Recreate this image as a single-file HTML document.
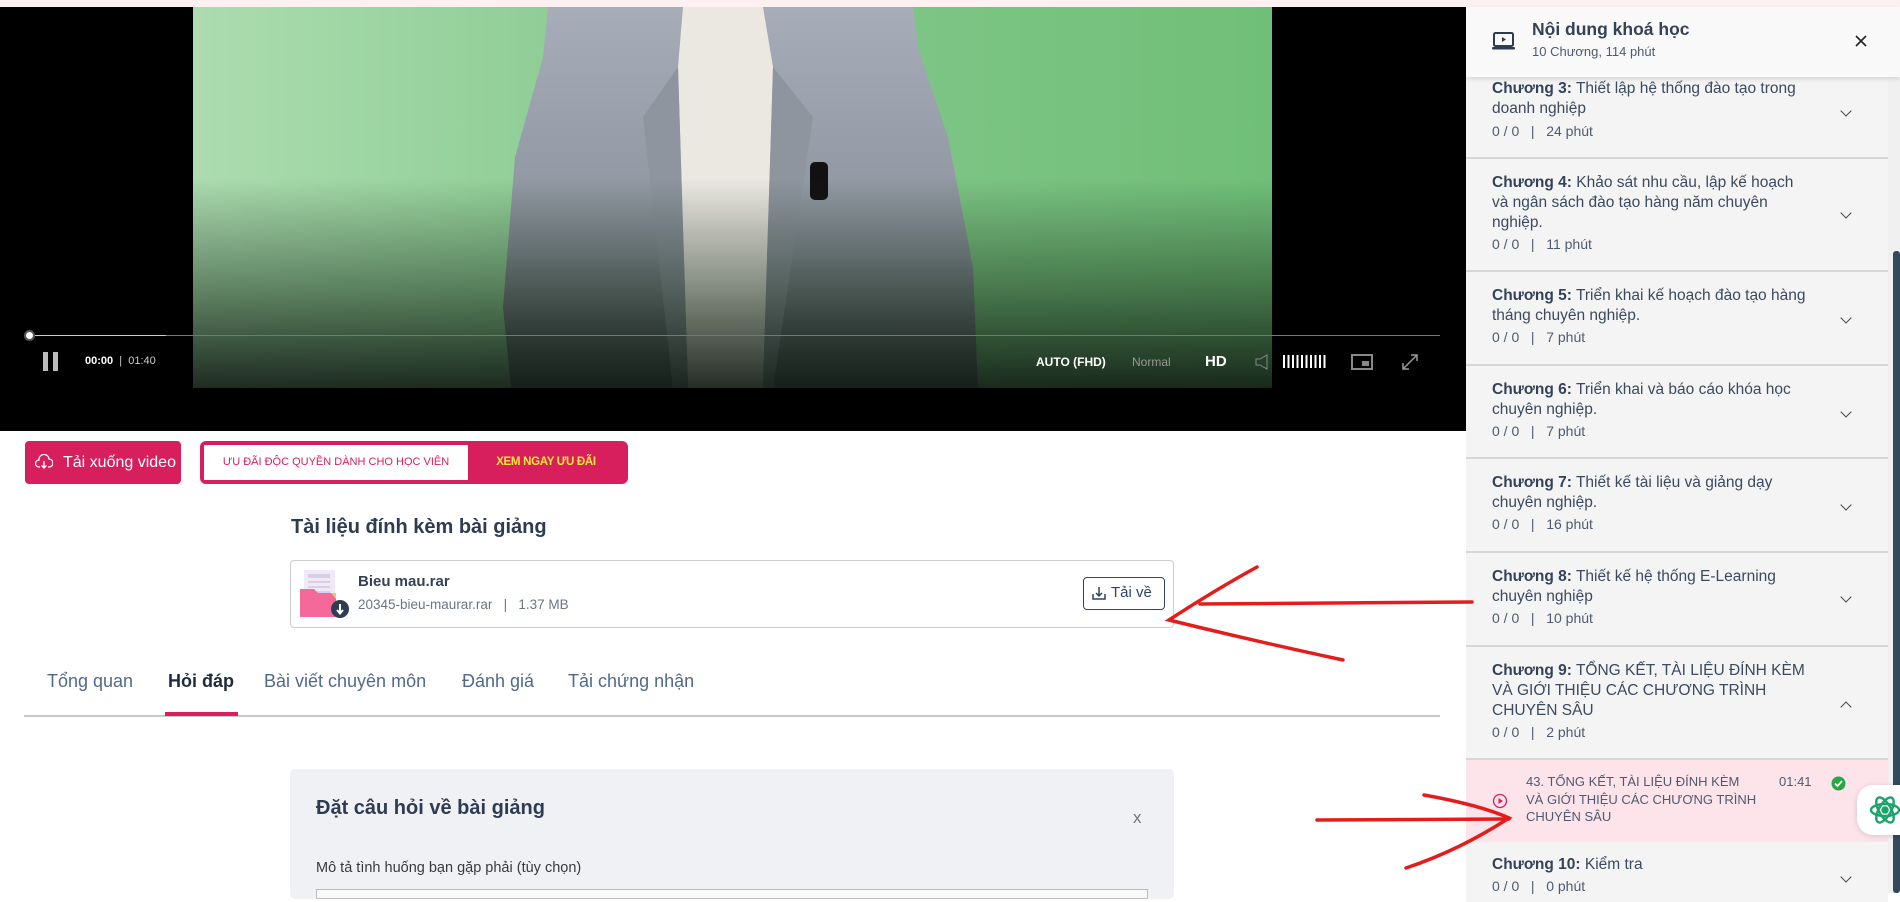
<!DOCTYPE html>
<html><head><meta charset="utf-8"><style>
*{margin:0;padding:0;box-sizing:border-box}
body{width:1900px;height:893px;overflow:hidden;background:#fff;font-family:"Liberation Sans","Noto Sans CJK SC",sans-serif;position:relative}
.a{position:absolute}
.ctl{color:#fff;font-size:12px;font-weight:bold}
.row{position:absolute;left:1466px;width:422px;border-bottom:2px solid #d6d6d6;background:#f4f4f4}
.row .t{position:absolute;left:26px;white-space:nowrap;font-size:15.5px;line-height:20px;color:#3b4a5e}
.row .t b{color:#344257}
.row .m{position:absolute;left:26px;font-size:14px;color:#4d5b70;white-space:pre}
.chev{position:absolute;left:376px;width:8px;height:8px;border-right:1.6px solid #444;border-bottom:1.6px solid #444;transform:rotate(45deg)}
.tab{position:absolute;top:671px;font-size:18px;color:#52698a}
</style></head><body>
<div class="a" style="left:0;top:0;width:1900px;height:7px;background:#fdf0f0"></div>
<!-- video -->
<div class="a" style="left:0;top:7px;width:1466px;height:424px;background:#000"></div>
<div class="a" style="left:193px;top:7px;width:1079px;height:381px;background:linear-gradient(90deg,#acdcb0,#86c98d 45%,#70bf78);overflow:hidden">
<svg class="a" style="left:0;top:0" width="1079" height="381">
<defs><linearGradient id="j" x1="0" y1="0" x2="0" y2="1"><stop offset="0" stop-color="#a6adb8"/><stop offset=".65" stop-color="#8a919c"/><stop offset="1" stop-color="#5c6168"/></linearGradient></defs>
<path d="M355 0 L350 50 L322 150 L310 300 L318 381 L785 381 L780 260 L755 130 L725 40 L720 0 Z" fill="url(#j)"/>
<path d="M490 0 L485 60 L495 381 L570 381 L580 60 L570 0 Z" fill="#ebe8e2"/>
<path d="M485 60 L450 110 L480 381 L495 381 Z" fill="#8e959f"/>
<path d="M580 60 L620 110 L580 381 L570 381 Z" fill="#8e959f"/>
<rect x="617" y="155" width="18" height="38" rx="5" fill="#111"/>
</svg>
<div class="a" style="left:0;top:0;width:100%;height:100%;background:linear-gradient(180deg,rgba(0,0,0,0) 45%,rgba(20,40,22,.5) 75%,rgba(15,25,18,.9) 100%)"></div>
</div>
<div class="a" style="left:30px;top:335px;width:1410px;height:1px;background:#777"></div>
<div class="a" style="left:30px;top:335px;width:136px;height:1px;background:#ccc"></div>
<div class="a" style="left:24px;top:330px;width:11px;height:11px;border-radius:50%;background:#fff;border:2px solid #555"></div>
<div class="a" style="left:43px;top:352px;width:5px;height:19px;background:#bbb"></div>
<div class="a" style="left:53px;top:352px;width:5px;height:19px;background:#bbb"></div>
<div class="a ctl" style="left:85px;top:355px;font-size:11px">00:00 <span style="font-weight:normal;color:#ccc">&nbsp;|&nbsp; 01:40</span></div>
<div class="a ctl" style="left:1036px;top:355px">AUTO (FHD)</div>
<div class="a" style="left:1132px;top:355px;font-size:12px;color:#999">Normal</div>
<div class="a ctl" style="left:1205px;top:353px;font-size:15px">HD</div>
<svg class="a" style="left:1255px;top:354px" width="14" height="16"><path d="M1 5 H5 L12 1 V15 L5 11 H1 Z" fill="none" stroke="#888" stroke-width="1"/></svg>
<div class="a" style="left:1283px;top:355px;width:45px;height:13px;background:repeating-linear-gradient(90deg,#fff 0 2px,transparent 2px 4.5px)"></div>
<div class="a" style="left:1351px;top:354px;width:22px;height:16px;border:2px solid #888"></div>
<div class="a" style="left:1362px;top:361px;width:7px;height:5px;background:#888"></div>
<svg class="a" style="left:1401px;top:353px" width="18" height="18"><path d="M2 16 L16 2 M10 2 H16 V8 M2 10 V16 H8" fill="none" stroke="#999" stroke-width="1.5"/></svg>
<!-- buttons -->
<div class="a" style="left:25px;top:441px;width:156px;height:43px;background:#d61f5c;border-radius:4px;color:#fff;font-size:16px;line-height:43px;padding-left:38px">Tải xuống video</div>
<svg class="a" style="left:35px;top:454px" width="18" height="16"><path d="M5 13 H4 A3.5 3.5 0 0 1 4 6 A5 5 0 0 1 14 5 A3.5 3.5 0 0 1 14 13 H13 M9 7 V14 M6.5 11.5 L9 14 L11.5 11.5" fill="none" stroke="#fff" stroke-width="1.3"/></svg>
<div class="a" style="left:200px;top:441px;width:428px;height:43px;background:#d61f5c;border-radius:6px"></div>
<div class="a" style="left:204px;top:445px;width:264px;height:35px;background:#fff;color:#d61f5c;font-size:11px;text-align:center;line-height:35px">ƯU ĐÃI ĐỘC QUYỀN DÀNH CHO HỌC VIÊN</div>
<div class="a" style="left:468px;top:445px;width:156px;height:35px;color:#ffe838;font-size:11.5px;font-weight:bold;text-align:center;line-height:35px;letter-spacing:-.3px">XEM NGAY ƯU ĐÃI</div>
<!-- attachment -->
<div class="a" style="left:291px;top:516px;font-size:20px;font-weight:bold;color:#2e3c52">Tài liệu đính kèm bài giảng</div>
<div class="a" style="left:290px;top:560px;width:884px;height:68px;border:1.5px solid #ccc;border-radius:4px"></div>
<svg class="a" style="left:300px;top:569px" width="52" height="52">
<rect x="4" y="1" width="31" height="36" fill="#efeaf5"/><rect x="8" y="5" width="22" height="4" fill="#d9cfe8"/><rect x="8" y="12" width="22" height="2" fill="#d9cfe8"/><rect x="8" y="17" width="22" height="2" fill="#d9cfe8"/><rect x="8" y="22" width="22" height="2" fill="#d9cfe8"/>
<path d="M0 20 H14 L18 24 H36 V48 H0 Z" fill="#f4699a"/><path d="M31 24 L36 24 V30 Z" fill="#f1c36b"/>
<circle cx="40" cy="40" r="9" fill="#2e3d55"/><path d="M40 35 V44 M37 41 L40 44.5 L43 41" stroke="#fff" stroke-width="2" fill="none"/></svg>
<div class="a" style="left:358px;top:573px;font-size:15px;font-weight:bold;color:#344257">Bieu mau.rar</div>
<div class="a" style="left:358px;top:597px;font-size:13.5px;color:#6a7585">20345-bieu-maurar.rar &nbsp;&nbsp;| &nbsp;&nbsp;1.37 MB</div>
<div class="a" style="left:1083px;top:577px;width:82px;height:33px;border:1.5px solid #2e4466;border-radius:4px;font-size:15px;color:#2e4466;line-height:30px;padding-left:27px">Tải về</div>
<svg class="a" style="left:1092px;top:586px" width="14" height="14"><path d="M1 8 V13 H13 V8 M7 1 V10 M4 7 L7 10 L10 7" fill="none" stroke="#2e4466" stroke-width="1.5"/></svg>
<!-- tabs -->
<div class="tab" style="left:47px">Tổng quan</div>
<div class="tab" style="left:168px;font-weight:bold;color:#1e2b3c">Hỏi đáp</div>
<div class="tab" style="left:264px">Bài viết chuyên môn</div>
<div class="tab" style="left:462px">Đánh giá</div>
<div class="tab" style="left:568px">Tải chứng nhận</div>
<div class="a" style="left:24px;top:715px;width:1416px;height:1.5px;background:#c8c8c8"></div>
<div class="a" style="left:165px;top:712px;width:73px;height:4px;background:#d61f5c"></div>
<!-- question -->
<div class="a" style="left:290px;top:769px;width:884px;height:130px;background:#f0f1f5;border-radius:5px"></div>
<div class="a" style="left:316px;top:797px;font-size:20px;font-weight:bold;color:#2e3c52">Đặt câu hỏi về bài giảng</div>
<div class="a" style="left:1133px;top:808px;font-size:17px;color:#777">x</div>
<div class="a" style="left:316px;top:860px;font-size:14.5px;color:#3a3a3a">Mô tả tình huống bạn gặp phải (tùy chọn)</div>
<div class="a" style="left:316px;top:889px;width:832px;height:10px;background:#fafafa;border:1px solid #bbb"></div>
<!-- sidebar -->
<div class="a" style="left:1466px;top:7px;width:434px;height:886px;background:#f4f4f4;border-left:1px solid #ddd"></div>
<div class="a" style="left:1888px;top:77px;width:12px;height:816px;background:#f0f0f0"></div>
<div class="a" style="left:1893px;top:251px;width:7px;height:642px;background:#34495e;border-radius:3px"></div>
<div class="row" style="top:77px;height:82px"><div class="t" style="top:2px"><b>Chương 3:</b> Thiết lập hệ thống đào tạo trong<br>doanh nghiệp</div><div class="m" style="top:46px">0 / 0   |   24 phút</div><div class="chev" style="top:30px"></div></div>
<div class="row" style="top:159px;height:113px"><div class="t" style="top:14px"><b>Chương 4:</b> Khảo sát nhu cầu, lập kế hoạch<br>và ngân sách đào tạo hàng năm chuyên<br>nghiệp.</div><div class="m" style="top:77px">0 / 0   |   11 phút</div><div class="chev" style="top:50px"></div></div>
<div class="row" style="top:272px;height:94px"><div class="t" style="top:14px"><b>Chương 5:</b> Triển khai kế hoạch đào tạo hàng<br>tháng chuyên nghiệp.</div><div class="m" style="top:57px">0 / 0   |   7 phút</div><div class="chev" style="top:42px"></div></div>
<div class="row" style="top:366px;height:93px"><div class="t" style="top:14px"><b>Chương 6:</b> Triển khai và báo cáo khóa học<br>chuyên nghiệp.</div><div class="m" style="top:57px">0 / 0   |   7 phút</div><div class="chev" style="top:42px"></div></div>
<div class="row" style="top:459px;height:94px"><div class="t" style="top:14px"><b>Chương 7:</b> Thiết kế tài liệu và giảng dạy<br>chuyên nghiệp.</div><div class="m" style="top:57px">0 / 0   |   16 phút</div><div class="chev" style="top:42px"></div></div>
<div class="row" style="top:553px;height:94px"><div class="t" style="top:14px"><b>Chương 8:</b> Thiết kế hệ thống E-Learning<br>chuyên nghiệp</div><div class="m" style="top:57px">0 / 0   |   10 phút</div><div class="chev" style="top:40px"></div></div>
<div class="row" style="top:647px;height:113px"><div class="t" style="top:14px"><b>Chương 9:</b> TỔNG KẾT, TÀI LIỆU ĐÍNH KÈM<br>VÀ GIỚI THIỆU CÁC CHƯƠNG TRÌNH<br>CHUYÊN SÂU</div><div class="m" style="top:77px">0 / 0   |   2 phút</div><div class="chev" style="top:56px;transform:rotate(225deg)"></div></div>
<div class="a" style="left:1466px;top:760px;width:422px;height:82px;background:#fde3ea"></div>
<div class="a" style="left:1526px;top:773px;width:240px;font-size:13px;line-height:17.5px;color:#4d5b70">43. TỔNG KẾT, TÀI LIỆU ĐÍNH KÈM<br>VÀ GIỚI THIỆU CÁC CHƯƠNG TRÌNH<br>CHUYÊN SÂU</div>
<svg class="a" style="left:1492px;top:793px" width="16" height="16"><circle cx="8" cy="8" r="6.5" fill="none" stroke="#d61f5c" stroke-width="1.3"/><path d="M6.5 5 L11 8 L6.5 11 Z" fill="#d61f5c"/></svg>
<div class="a" style="left:1779px;top:774px;font-size:13px;color:#4d5b70">01:41</div>
<svg class="a" style="left:1831px;top:776px" width="15" height="15"><circle cx="7.5" cy="7.5" r="7" fill="#28a745"/><path d="M4 7.5 L6.5 10 L11 5" fill="none" stroke="#fff" stroke-width="1.7"/></svg>
<div class="row" style="top:842px;height:60px;border:none"><div class="t" style="top:13px"><b>Chương 10:</b> Kiểm tra</div><div class="m" style="top:36px">0 / 0   |   0 phút</div><div class="chev" style="top:31px"></div></div>
<!-- header -->
<div class="a" style="left:1466px;top:7px;width:434px;height:70px;background:#f9f9f9;box-shadow:0 2px 5px rgba(0,0,0,.12)"></div>
<svg class="a" style="left:1492px;top:31px" width="24" height="20"><rect x="2" y="2" width="19" height="13" rx="1.5" fill="none" stroke="#2e3c52" stroke-width="2"/><path d="M10 6 L14 8.5 L10 11 Z" fill="#2e3c52"/><rect x="0" y="16" width="23" height="2.5" rx="1" fill="#2e3c52"/></svg>
<div class="a" style="left:1532px;top:19px;font-size:17.5px;font-weight:bold;color:#344257">Nội dung khoá học</div>
<div class="a" style="left:1532px;top:44px;font-size:13px;color:#4d5b70">10 Chương, 114 phút</div>
<svg class="a" style="left:1855px;top:35px" width="12" height="12"><path d="M1 1 L11 11 M11 1 L1 11" stroke="#222" stroke-width="1.6"/></svg>
<!-- chat button -->
<div class="a" style="left:1857px;top:785px;width:60px;height:50px;background:#fff;border-radius:16px;box-shadow:0 1px 6px rgba(0,0,0,.15)"></div>
<svg class="a" style="left:1869px;top:792px" width="32" height="36" fill="none" stroke="#1aa36a" stroke-width="2.4"><ellipse cx="16" cy="18" rx="14" ry="6"/><ellipse cx="16" cy="18" rx="14" ry="6" transform="rotate(60 16 18)"/><ellipse cx="16" cy="18" rx="14" ry="6" transform="rotate(-60 16 18)"/><circle cx="16" cy="18" r="2.5" fill="#1aa36a"/></svg>
<!-- red annotations -->
<svg class="a" style="left:0;top:0" width="1900" height="893" fill="none" stroke="#e41c1c" stroke-width="3.5" stroke-linecap="round">
<path d="M1472 602 L1200 604"/>
<path d="M1257 567 Q1215 590 1169 620 Q1250 640 1343 660"/>
<path d="M1317 820 L1509 819"/>
<path d="M1424 795 Q1480 805 1509 818 Q1460 850 1406 868"/>
</svg>
</body></html>
